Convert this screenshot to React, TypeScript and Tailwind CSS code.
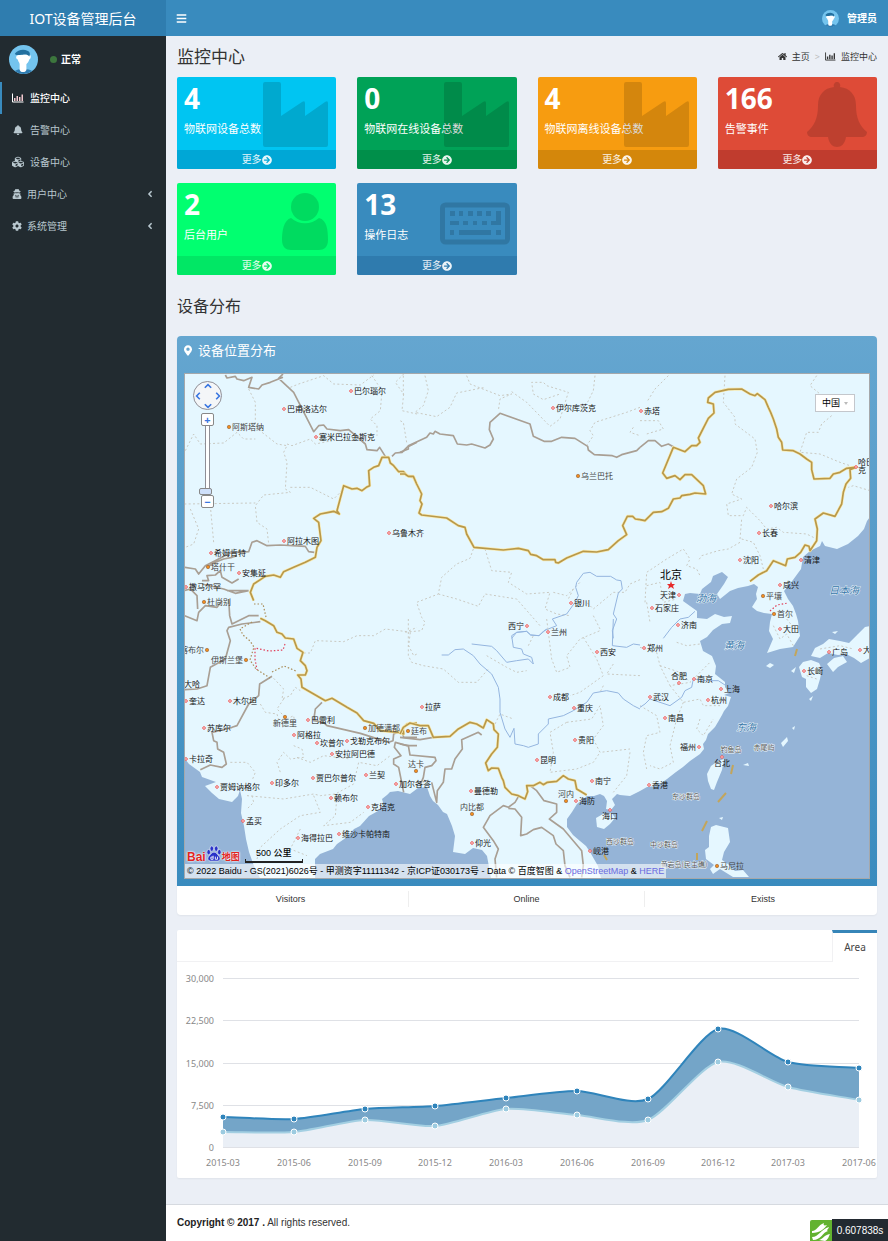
import type { ReactNode } from "react";
import {
  FaAngleLeft,
  FaArrowCircleRight,
  FaBars,
  FaBell,
  FaCog,
  FaCubes,
  FaHome,
  FaMapMarkerAlt,
  FaUserSecret,
} from "react-icons/fa";

function Avatar({ className }: { className: string }) {
  return (
    <svg viewBox="0 0 30 30" className={className} role="img" aria-label="头像">
      <circle cx="15" cy="15" r="15" fill="#74c4ee" />
      <path d="M6 27 C9 24 21 24 24 27 A15 15 0 0 1 6 27Z" fill="#2f7cb0" />
      <path d="M11 18h7v7c0 4-7 4-7 0z" fill="#fff" />
      <path d="M8 11c3-1 11-2 13-1 2 0 2 4 0 5-1 4-4 6-7 6-2 0-4-3-5-6-2-1-2-3-1-4z" fill="#fff" />
      <path d="M6 9c3-4 9-5 13-3 3 1 3 4 2 6-2-3-5-2-7-2-3 0-5 1-7 0z" fill="#23709f" />
    </svg>
  );
}

function BarChartIcon({ className = "", bar = "currentColor" }: { className?: string; bar?: string }) {
  return (
    <svg viewBox="0 0 24 20" className={className} aria-hidden="true">
      <path d="M1 1v17h22" fill="none" stroke="currentColor" strokeWidth="2" />
      <path d="M4 10h3v6H4zM9 6h3v10H9zM14 8h3v8h-3zM19 3h3v13h-3z" fill={bar} />
    </svg>
  );
}

const Industry = () => (
  <path d="M6 1h14q2 0 2 2v32L43 21q3-2 3 1v13L66 21q3-2 3 1v42q0 2-2 2H6q-2 0-2-2V3q0-2 2-2z" />
);
const Person = () => (
  <>
    <circle cx="46" cy="20" r="14" />
    <path d="M32 31c8 7 20 7 28 0 8 2 9 12 9 22 0 7-4 10-9 10H32c-5 0-9-3-9-10 0-10 2-20 9-22z" />
  </>
);
const Keyboard = () => (
  <>
    <rect x="2.500" y="18" width="65" height="37" rx="3" fill="none" stroke="currentColor" strokeWidth="5" />
    <path d="M10 24h5v5h-5zM19 24h4v5h-4zM28 24h5v5h-5zM37 24h5v5h-5zM46 24h5v5h-5zM56 24h5v14H51v-4h5zM10 34h9v4h-9zM23 34h5v4h-5zM33 34h4v4h-4zM42 34h5v4h-5zM10 43h4v5h-4zM19 43h32v5H19zM56 43h5v5h-5z" />
  </>
);
const Bell = () => (
  <>
    <path d="M37 1c2 0 4 2 3 5 10 1 16 8 16 18 0 14 4 21 11 27 0 3-2 5-5 5H12c-3 0-5-2-5-5 7-6 11-13 11-27 0-10 6-17 16-18-1-3 1-5 3-5z" />
    <path d="M28 56h18c-1 7-5 10-9 10s-8-3-9-10z" />
  </>
);

const stats = [
  { value: "4", label: "物联网设备总数", bg: "bg-[#00c5f2]", foot: "bg-[#00a7d6]", icon: <Industry /> },
  { value: "0", label: "物联网在线设备总数", bg: "bg-[#00a257]", foot: "bg-[#008f4a]", icon: <Industry /> },
  { value: "4", label: "物联网离线设备总数", bg: "bg-[#f79c10]", foot: "bg-[#d4870b]", icon: <Industry /> },
  { value: "166", label: "告警事件", bg: "bg-[#de4b37]", foot: "bg-[#c03c2e]", icon: <Bell /> },
  { value: "2", label: "后台用户", bg: "bg-[#01ff70]", foot: "bg-[#01e765]", icon: <Person /> },
  { value: "13", label: "操作日志", bg: "bg-[#398bbe]", foot: "bg-[#2f7bae]", icon: <Keyboard /> },
];

function StatCard({ value, label, bg, foot, icon }: (typeof stats)[number]) {
  return (
    <section className={`relative overflow-hidden rounded-xs text-white ${bg}`}>
      <div className="h-[73px] px-[7px] pt-[3px]">
        <div className="font-['Open_Sans'] text-[28px] leading-9 font-bold">{value}</div>
        <p className="pt-[5px] text-[11px] leading-4 whitespace-nowrap">{label}</p>
      </div>
      <svg viewBox="0 0 70 70" className="absolute top-1 right-[7px] size-[70px] fill-current text-black/14" aria-hidden="true">
        {icon}
      </svg>
      <a href="#more" className={`relative flex h-[19px] items-center justify-center text-[10px] text-white/90 ${foot}`}>
        更多
        <FaArrowCircleRight />
      </a>
    </section>
  );
}

const menu: { label: string; icon: ReactNode; active?: boolean; sub?: boolean }[] = [
  { label: "监控中心", icon: <BarChartIcon className="h-[10px] w-3" bar="#f3c9cf" />, active: true },
  { label: "告警中心", icon: <FaBell className="w-3" /> },
  { label: "设备中心", icon: <FaCubes className="size-3" /> },
  { label: "用户中心", icon: <FaUserSecret />, sub: true },
  { label: "系统管理", icon: <FaCog />, sub: true },
];

type Place = [name: string, x: number, y: number, side?: "l" | "t" | "b"];

const cities: Place[] = [
  ["巴尔瑙尔", 351, 392], ["巴甫洛达尔", 284, 410], ["塞米巴拉金斯克", 316, 438], ["阿拉木图", 284, 542],
  ["希姆肯特", 211, 554], ["安集延", 239, 574], ["撒马尔罕", 186, 588], ["乌鲁木齐", 389, 534],
  ["伊尔库茨克", 553, 409], ["银川", 571, 604], ["西宁", 527, 627, "l"], ["兰州", 548, 633],
  ["赤塔", 641, 412], ["哈尔滨", 771, 507], ["长春", 759, 534], ["沈阳", 740, 561], ["清津", 801, 561],
  ["咸兴", 780, 586], ["大田", 780, 630], ["天津", 679, 596, "l"], ["石家庄", 652, 609], ["济南", 678, 626],
  ["奎达", 186, 702], ["木尔坦", 230, 702], ["苏库尔", 204, 729], ["卡拉奇", 186, 760], ["巴雷利", 308, 721],
  ["阿格拉", 294, 736], ["坎普尔", 317, 744], ["戈勒克布尔", 347, 742], ["安拉阿巴德", 332, 755],
  ["贾姆讷格尔", 217, 788], ["印多尔", 272, 784], ["贾巴尔普尔", 313, 779], ["兰契", 366, 776],
  ["赖布尔", 331, 799], ["克塔克", 368, 808], ["孟买", 243, 822], ["海得拉巴", 298, 839],
  ["维沙卡帕特南", 339, 835], ["加尔各答", 396, 785], ["拉萨", 422, 708], ["成都", 550, 698], ["重庆", 574, 709],
  ["西安", 597, 653], ["贵阳", 575, 741], ["昆明", 537, 761], ["南宁", 592, 782], ["曼德勒", 471, 792],
  ["海防", 576, 802], ["海口", 610, 811, "b"], ["仰光", 472, 844], ["岘港", 590, 852], ["郑州", 644, 649],
  ["合肥", 679, 684, "t"], ["南京", 694, 680], ["上海", 721, 690], ["杭州", 708, 701], ["武汉", 650, 698],
  ["南昌", 665, 719], ["福州", 699, 748, "l"], ["台北", 722, 758, "b"], ["香港", 649, 786], ["广岛", 829, 653],
  ["大", 860, 651], ["长崎", 804, 672],
];

const capitals: Place[] = [
  ["阿斯塔纳", 229, 428], ["塔什干", 208, 568], ["杜尚别", 204, 603], ["乌兰巴托", 578, 477], ["平壤", 763, 597],
  ["首尔", 774, 615], ["喀布尔", 207, 651, "l"], ["伊斯兰堡", 246, 661, "l"], ["新德里", 285, 718, "b"],
  ["加德满都", 365, 729], ["廷布", 408, 732], ["达卡", 416, 772, "t"], ["内比都", 472, 815, "t"],
  ["河内", 566, 802, "t"], ["马尼拉", 717, 867],
];

const seas: [string, number, number][] = [["渤海", 706, 603], ["日本海", 844, 595], ["黄海", 734, 650], ["东海", 746, 732]];

const islands: [string, number, number][] = [
  ["钓鱼岛", 731, 753], ["赤尾屿", 764, 751], ["东沙群岛", 686, 800], ["中沙群岛", 664, 848],
  ["黄岩岛(民主礁)", 684, 868], ["西沙群岛", 620, 845],
];

function PlaceLabel({ place, capital }: { place: Place; capital?: boolean }) {
  const [name, x, y, side] = place;
  const tx = side === "l" ? x - 3 : side ? x : x + 3;
  const ty = side === "t" ? y - 4 : side === "b" ? y + 9 : y + 3;
  return (
    <g>
      {capital ? (
        <circle cx={x} cy={y} r="1.700" fill="#f08c1e" stroke="#94633a" strokeWidth=".6" />
      ) : (
        <circle cx={x} cy={y} r="1.300" fill="#fff" stroke="#ee5555" strokeWidth="1" />
      )}
      <text x={tx} y={ty} textAnchor={side === "l" ? "end" : side ? "middle" : "start"} fill={capital ? "#444" : "#151515"}>
        {name}
      </text>
    </g>
  );
}

/* Border sheets are drawn at three times the map scale, each with its own origin. */
const sheets = [
  {
    origin: "translate(177 330) scale(.33333)",
    gold: "M720 468L710 445 690 440 680 428 665 428 650 410 640 402 635 385 615 385 605 410 590 415 575 425 578 470 568 475 555 485 540 478 525 480 500 470 480 545 487 555 470 547 455 550 430 555 410 568 425 580 432 635 420 655 415 685 385 700 350 715 320 728 310 745 290 738 265 742 230 765 220 790 230 815",
    gray: "M145 138L150 147 175 142 180 150 200 155 225 145 215 175 245 180 255 168 280 160 318 145 M318 135L305 148 350 190 410 308 425 290 440 288 450 300 490 305 515 302 565 345 570 362 600 365 608 355 625 382 M645 382L655 372 675 370 690 355 720 340 M22 715L55 720 65 735 85 710 160 672 215 668 225 640 240 635 270 650 310 648 385 652 395 668 412 670 M90 715L115 700 140 690 165 685 180 680 M75 755L95 755 90 740 115 738 130 725 135 745 165 762 185 750 M75 765L140 780 175 793 215 785 M215 785L150 785 M22 785L40 780 60 800 62 840",
    dash: "M215 180L235 220 235 288 255 310 300 345 330 350 320 370 330 400 325 480 340 490 260 498 235 530 240 580 270 600 275 645 M25 365L50 315 70 345 140 342 180 310 200 330 235 330 M330 345L345 350 400 330 415 345 465 335 M340 175L365 165 440 140 470 165 550 168 590 138 M340 475L400 475 470 510 500 480 M22 525L235 522 M100 530L110 640 M40 540L65 600 50 645 25 655 M585 140L615 185 610 245 580 270 600 290 600 320 M680 135L655 160 680 195 675 245 720 255",
    river: "",
  },
  {
    origin: "translate(400 370) scale(.33333)",
    gold: "M0 315L15 315 25 322 40 322 50 345 65 375 60 395 66 405 57 432 65 438 140 447 175 470 195 475 200 495 222 535 310 543 355 538 385 545 392 556 410 560 430 572 465 572 467 580 475 582 500 567 550 547 590 549 625 542 655 515 680 497 668 470 682 442 698 442 706 450 720 452",
    gray: "M0 250L25 240 25 230 80 205 90 192 100 195 105 187 120 195 160 200 172 225 200 228 215 225 255 237 270 228 280 210 268 182 270 160 300 133 390 165 400 202 432 217 455 217 485 205 525 208 563 232 565 243 583 257 637 260 650 265 665 257 710 245 720 235",
    dash: "M75 20L85 65 70 110 45 130 110 143 150 115 170 72 255 55 M200 20L210 45 300 80 335 75 300 90 295 125 M335 68L380 100 450 172 480 150 505 70 440 50 430 40 395 40 400 75 430 92 480 75 M585 20L580 65 560 105 505 120 M720 115L680 130 585 160 570 185 580 200 560 230 M700 175L690 190 720 200 M220 540L210 568 170 585 125 625 115 675 50 700 65 745 75 760 65 785 10 790 M115 675L170 690 235 712 255 675 350 690 420 770 M255 540L275 605 335 610 325 640 380 675 450 670 435 720 470 735 510 740 M460 670L500 680 540 640 M720 632L690 645 675 670 640 670 580 720 560 700 M20 220L10 160 0 155 M10 20L10 85 M520 660L505 690 M580 740L600 780",
    river: "M335 808L350 790 380 787 392 798 417 800 432 785 470 770 457 750 500 735 525 700 535 680 527 655 530 640 550 613 570 610 590 622 632 622 650 633 663 635 667 660 655 672 640 735 650 750 637 785 640 808",
  },
  {
    origin: "translate(640 370) scale(.33333)",
    gold: "M0 452L15 455 40 430 65 428 85 418 100 390 120 387 125 380 150 376 165 372 197 375 190 350 155 317 135 317 120 332 105 320 80 328 68 312 100 235 135 248 155 230 170 230 180 220 175 207 205 148 222 132 220 105 203 100 205 87 225 70 265 61 305 60 330 75 345 80 352 74 375 92 385 115 392 130 400 150 410 180 415 205 425 220 428 243 460 245 480 255 500 270 515 280 515 302 522 330 570 328 580 315 600 310 620 298 650 294 630 302 632 328 618 345 610 370 605 405 585 442 550 432 525 450 532 480 530 515 510 545 507 532 495 528 482 550 465 565 442 570 437 590 400 575 380 605 355 618 330 637",
    gray: "M0 235L25 215 45 215 65 232 85 225 100 233",
    dash: "M85 20L45 60 20 100 M255 20L250 100 285 145 285 165 345 210 352 250 335 295 290 330 275 375 305 390 260 405 265 440 310 440 320 415 360 455 380 480 410 475 430 490 500 495 530 510 M300 510L305 450 M305 510L340 520 360 560 370 600 M300 520L265 540 235 545 185 560 175 575 M530 20L510 50 540 75 M575 140L545 165 535 190 500 190 480 250 540 255 600 280 630 290 M690 365L640 350 625 355 M0 155L55 155 70 180 20 195 M15 700L20 610 80 570 130 540 150 570 140 590 170 600 180 620 M20 650L60 640 70 700 110 690 M20 700L30 760",
    river: "M165 727L145 745 120 750 95 775 70 808",
  },
  {
    origin: "translate(177 600) scale(.33333)",
    gold: "M250 58L265 65 290 80 300 100 315 105 325 117 350 120 360 148 378 160 370 185 385 200 390 215 385 228 362 228 372 240 375 265 410 285 445 305 465 298 510 325 540 342 560 365 590 373 610 395 665 400 680 405 678 388 690 375 720 372",
    gray: "M22 50L60 65 65 40 85 20 120 25 135 5 M155 0L158 50 165 75 215 50 245 50 M250 68L195 75 155 85 150 95 160 125 145 180 100 205 90 260 60 270 22 272 M285 232L248 255 245 290 215 315 180 380 165 385 105 400 110 425 120 430 122 450 140 460 148 495 135 505 100 498 70 512 M435 310L415 330 410 365 440 370 450 380 550 403 635 430 648 425 650 405 675 395 680 415 720 415 M720 440L690 440 655 430 652 445 672 470 650 480 650 495 665 505 680 580",
    dash: "M380 162L400 162 415 125 500 128 540 110 590 110 625 90 690 98 720 85 M290 238L320 270 315 300 340 290 355 265 370 275 M320 300L300 330 330 360 350 350 355 385 M250 315L265 340 300 345 310 380 M160 490L210 490 235 520 225 545 M210 590L320 600 410 585 430 590 475 585 530 555 545 490 600 500 640 470 M350 440L375 450 380 475 340 480 320 460 300 490 310 520 M360 475L400 490 440 470 520 480 M410 590L430 640 370 650 310 690 250 745 240 780 M480 590L475 650 440 680 520 670 560 640 M370 690L340 750 390 770 M700 100L695 140 710 170 720 165 M225 590L230 610 210 630",
    river: "",
  },
  {
    origin: "translate(400 620) scale(.33333)",
    gold: "M0 345L10 325 30 312 60 320 85 320 100 355 150 352 175 330 210 310 230 315 250 327 260 302 280 315 282 332 295 345 292 385 275 405 257 432 265 455 275 447 295 448 305 475 310 485 315 505 335 525 355 530 375 540 383 518 380 500 400 500 420 490 430 497 442 490 470 487 490 470 505 480 525 485 530 510 560 528",
    gray: "M0 375L25 380 30 408 105 415 108 425 95 440 75 445 70 475 60 500 M0 355L60 362 100 355 M245 348L235 340 185 362 187 390 165 420 155 450 135 450 130 490 112 515 110 550 95 490 M357 530L345 550 325 565 310 560 270 590 250 625 280 665 295 690 285 720 290 775 M325 568L345 570 365 595 362 650 380 645 400 632 425 625 460 650 468 675 490 695 495 740 510 775 M390 500L410 515 432 545 470 555 470 580 448 600 490 630 545 695 550 740 545 775",
    dash: "M25 0L25 110 35 130 70 140 130 150 175 190 230 190 265 150 M260 110L320 145 350 160 380 155 M385 80L400 50 M440 0L455 120 470 160 510 145 500 110 540 60 600 35 M550 55L590 120 610 170 540 220 510 230 M285 315L300 285 340 300 M500 310L450 340 460 400 450 460 530 450 580 430 600 400 M500 310L575 300 600 260 610 320 580 360 600 400 690 390 M690 400L680 470 640 520 M610 200L600 220 M640 135L620 165 720 170",
    river: "M335 50L350 40 380 37 392 48 417 50 440 30 M335 50L340 85 365 90 370 105 395 115 400 135 385 120 350 125 320 130 290 95 275 82 215 75 M640 0L637 80 680 85 700 75 720 78 M125 108L145 108 165 92 190 90 220 110 240 135 275 165 295 205 300 240 300 280 315 330 330 355 342 328 345 375 370 380 385 385 415 375 415 345 445 315 445 300 490 290 520 275 560 250 580 222 620 215 655 222 670 240 700 260 720 270",
  },
  {
    origin: "translate(640 620) scale(.33333)",
    gold: "",
    gray: "",
    dash: "M0 85L50 100 60 140 90 200 150 190 M110 70L140 80 180 75 M60 140L120 160 150 190 190 150 210 130 M90 200L130 250 180 240 190 260 240 260 M130 250L110 300 90 380 100 430 60 450 30 440 M180 300L170 330 190 350 220 300 M0 260L50 290 60 340 20 350 10 400 20 450 M400 20L420 60 440 45 460 80 M440 0L460 25 M540 90L600 80 640 90 M500 170L530 180",
    river: "M0 265L15 255 30 240 60 250 90 260 125 235 135 215 155 205 160 180 200 185 235 185 258 200",
  },
];

function DeviceMap() {
  return (
    <svg
      viewBox="185 375 684 504"
      className="block h-auto w-full bg-[#e5f7ff] font-['Noto_Sans_CJK_SC',sans-serif] text-[8px]"
      role="img"
      aria-label="设备位置分布"
    >
      <g fill="#95b4d7">
        <path d="M870 518L867 522 864 530 858 537 848 545 837 550 825 547 822 542 820 547 810 552 803 558 801 570 790 585 784 592 788 600 793 607 796 615 798 622 800 637 793 648 780 650 767 654 773 640 769 632 770 623 772 615 764 614 757 612 752 608 757 600 756 595 758 588 754 585 748 587 738 589 730 592 720 600 717 595 724 585 728 578 722 573 713 577 711 583 702 590 700 595 690 594 685 595 683 602 697 612 697 619 707 620 715 615 724 618 732 617 730 624 722 625 713 631 707 638 700 642 703 652 712 657 716 667 715 675 725 683 725 688 729 694 724 696 731 698 728 707 724 712 722 716 718 723 715 728 708 735 706 741 703 745 704 750 700 755 690 762 683 768 676 773 667 780 657 787 647 788 640 792 630 797 620 796 617 795 612 800 615 806 611 811 606 810 607 802 604 797 600 795 594 797 587 797 582 801 577 805 572 813 567 820 567 828 573 836 580 842 586 847 590 853 594 860 598 867 601 879 870 879Z" />
        <path d="M315 879L315 860 320 855 333 850 337 845 347 838 354 830 360 827 369 817 378 812 384 807 382 800 387 796 390 793 398 792 410 795 418 789 427 788 430 797 433 802 438 806 443 813 447 815 452 827 455 837 453 853 465 855 473 849 482 851 487 857 491 879Z" />
        <path d="M185 760L189 765 200 773 202 778 216 783 205 787 212 794 219 800 232 803 238 797 240 791 242 800 241 814 244 827 246 840 249 853 254 867 260 879 185 879Z" />
      </g>
      <g fill="#e5f7ff">
        <path d="M596 819L603 815 612 814 615 819 610 825 604 830 597 828Z" />
        <path d="M718 762L724 760 722 771 717 783 714 791 711 790 708 782 707 775 711 767Z" />
        <path d="M711 828L716 826 728 829 730 843 724 853 722 861 728 865 735 872 743 871 749 878 733 878 720 870 713 875 710 870 714 866 706 860 705 851 709 848 709 837Z" />
        <path d="M811 657L815 649 823 645 829 640 840 642 849 644 858 635 865 628 870 627 870 659 861 664 854 659 846 655 838 656 828 654 820 659Z" />
        <path d="M799 668L803 663 811 661 819 664 822 670 820 680 817 690 811 694 806 688 806 680 802 678Z" />
        <path d="M827 665L834 659 843 657 847 663 838 668 833 673Z" />
        <path d="M766 667L770 664 774 666 770 669ZM781 744L787 738 788 742 783 748ZM743 766L748 764 749 767ZM792 729L795 727 794 731ZM791 672L796 668 794 674ZM809 700L813 697 811 702ZM832 633L838 632 835 635ZM719 819L723 818 722 821Z" />
      </g>
      {sheets.map((s) => (
        <g key={s.origin} transform={s.origin} fill="none" strokeLinejoin="round">
          <path d={s.dash} stroke="#c9c9c2" strokeWidth="3" strokeDasharray="6 7" />
          <path d={s.river} stroke="#94b5df" strokeWidth="3" />
          <path d={s.gray} stroke="#a99f94" strokeWidth="5" />
          <path d={s.gold} stroke="#f8ebb4" strokeWidth="9" />
          <path d={s.gold} stroke="#b8984a" strokeWidth="5" />
        </g>
      ))}
      <g fill="none" strokeWidth="1.200" strokeDasharray="1.500 2">
        <path d="M254 605L263 605 266 618M252 623L240 630 243 636 250 642 254 648 250 661 256 670 270 679M272 673L284 667 296 672" stroke="#a98c58" />
        <path d="M285 645L283 651 269 652 255 649 255 660 257 671M770 612L777 606 788 604" stroke="#e0405a" />
      </g>
      <path d="M733 766L731 775M726 794L718 803M707 822L702 832M697 854L697 861M604 856L607 861M797 650L795 657" stroke="#c2a55c" strokeWidth="2" />
      <g stroke="#eaf3fa" paintOrder="stroke" strokeLinejoin="round">
        <g textAnchor="middle" fill="#555" strokeWidth="1">
          {islands.map(([name, x, y]) => (
            <text key={name} x={x} y={y} className="text-[7px]">{name}</text>
          ))}
        </g>
        <g textAnchor="middle" fill="#3475a8" strokeWidth="1" className="text-[10px] italic">
          {seas.map(([name, x, y]) => (
            <text key={name} x={x} y={y}>{name}</text>
          ))}
        </g>
      </g>
      {capitals.map((p) => <PlaceLabel key={p[0]} place={p} capital />)}
      {cities.map((p) => <PlaceLabel key={p[0]} place={p} />)}
      <text x="184" y="688" fill="#151515">大哈</text>
      <circle cx="856" cy="468" r="1.300" fill="#fff" stroke="#ee5555" />
      <text fill="#151515">
        <tspan x="858" y="466">哈巴</tspan>
        <tspan x="858" y="474">克</tspan>
      </text>
      <text x="671" y="580" textAnchor="middle" fill="#000" className="text-[11px]">北京</text>
      <path d="M671 582l1 3h3l-2 2 1 3-3-2-3 2 1-3-2-2h3z" fill="#e62a2a" />
    </svg>
  );
}

function BaiduLogo() {
  return (
    <div className="flex items-end font-['Liberation_Sans'] text-[12px] leading-3 font-bold text-[#e1241f] [text-shadow:0_0_2px_#fff,0_0_2px_#fff]">
      <span>Bai</span>
      <svg viewBox="0 0 18 19" className="h-[19px] w-4" aria-hidden="true">
        <g fill="#2932c8" stroke="#fff" strokeWidth=".6">
          <ellipse cx="3" cy="8" rx="2" ry="3" />
          <ellipse cx="6.500" cy="4" rx="2" ry="3" />
          <ellipse cx="11.500" cy="4" rx="2" ry="3" />
          <ellipse cx="15" cy="8" rx="2" ry="3" />
          <path d="M9 8c3 0 4 3 6 5 2 3 0 5-2 5H5c-2 0-4-2-2-5 2-2 3-5 6-5z" />
        </g>
        <path d="M8 12v4H5.500v-2.500H8M10.500 13v3H13v-3" fill="none" stroke="#fff" />
      </svg>
      <span className="font-['Noto_Sans_CJK_SC'] text-[9px]">地图</span>
    </div>
  );
}

function PanControl() {
  const arrows: [string, string, string][] = [
    ["向上", "M1 6l4-4 4 4", "col-start-2 row-start-1"],
    ["向左", "M6 1l-4 4 4 4", "col-start-1 row-start-2"],
    ["向右", "M4 1l4 4-4 4", "col-start-3 row-start-2"],
    ["向下", "M1 4l4 4 4-4", "col-start-2 row-start-3"],
  ];
  return (
    <div className="grid size-[29px] grid-cols-3 grid-rows-3 place-items-center rounded-full border border-[#8e8e96] bg-[#f4f6f8]">
      {arrows.map(([name, d, place]) => (
        <button key={name} aria-label={name} className={place}>
          <svg viewBox="0 0 10 10" className="size-2" aria-hidden="true">
            <path d={d} fill="none" stroke="#3976e0" strokeWidth="2" />
          </svg>
        </button>
      ))}
    </div>
  );
}

const months = ["2015-03", "2015-06", "2015-09", "2015-12", "2016-03", "2016-06", "2016-09", "2016-12", "2017-03", "2017-06"];
const xs = [46, 117, 188, 258, 329, 400, 471, 541, 611, 682];
const upper = [155, 157, 147, 144, 136, 129, 137, 67, 100, 106];
const lower = [170, 170, 158, 164, 147, 153, 158, 100, 125, 138];

function curve(ys: number[]) {
  const slope = ys.map((_, i) => {
    const a = Math.max(0, i - 1);
    const b = Math.min(ys.length - 1, i + 1);
    return (ys[b] - ys[a]) / (xs[b] - xs[a]);
  });
  return ys.reduce((d, y, i) => {
    if (i === 0) return `M${xs[0]} ${y}`;
    const q = (xs[i] - xs[i - 1]) / 4;
    return `${d}C${xs[i - 1] + q} ${ys[i - 1] + q * slope[i - 1]} ${xs[i] - q} ${y - q * slope[i]} ${xs[i]} ${y}`;
  }, "");
}

function AreaChart() {
  return (
    <svg viewBox="0 0 700 216" className="block h-auto w-full font-['Noto_Sans',sans-serif] text-[9px]" role="img" aria-label="Area">
      {["30,000", "22,500", "15,000", "7,500", "0"].map((t, i) => {
        const y = 16 + Math.round(i * 42.3);
        return (
          <g key={t}>
            <path d={`M46 ${y + 0.5}H682`} stroke="#dfe1e6" strokeWidth="1" />
            <text x="37" y={y + 4} textAnchor="end" fill="#888">{t}</text>
          </g>
        );
      })}
      <path d={`${curve(upper)}V185H46Z`} fill="#74a5c8" />
      <path d={curve(upper)} fill="none" stroke="#2f84bb" strokeWidth="2" />
      <path d={`${curve(lower)}V185H46Z`} fill="#eaeff6" />
      <path d={curve(lower)} fill="none" stroke="#a3cfe2" strokeWidth="2" />
      {xs.map((x, i) => (
        <g key={x} stroke="#fff" strokeWidth="1">
          <circle cx={x} cy={upper[i]} r="3" fill="#2f84bb" />
          <circle cx={x} cy={lower[i]} r="3" fill="#9ccbe0" />
        </g>
      ))}
      {months.map((m, i) => (
        <text key={m} x={xs[i]} y="204" textAnchor="middle" fill="#888">{m}</text>
      ))}
    </svg>
  );
}

export default function App() {
  return (
    <div className="flex min-h-screen flex-col bg-[#ebeff6] font-['Noto_Sans','Noto_Sans_CJK_SC',sans-serif] text-[10px] text-[#333]">
      <header className="flex h-9 bg-[#398bbe] text-white">
        <a href="#home" className="flex w-[166px] shrink-0 items-center justify-center bg-[#2f7daf] text-[14px]">
          IOT设备管理后台
        </a>
        <button aria-label="切换菜单" className="px-[10px]">
          <FaBars className="size-[11px]" />
        </button>
        <a href="#me" className="ml-auto flex items-center gap-2 pr-[11px] font-bold">
          <Avatar className="size-[17px]" />
          管理员
        </a>
      </header>

      <div className="flex flex-1">
        <aside className="w-[166px] shrink-0 bg-[#222b30] text-[#b8c7ce]">
          <div className="flex h-[46px] items-center pl-[9px] font-bold text-white">
            <Avatar className="size-[29px]" />
            <span className="mr-1 ml-3 size-[7px] rounded-full bg-[#3c763d]" />
            正常
          </div>
          <nav>
            {menu.map((m) => (
              <a
                key={m.label}
                href={`#${m.label}`}
                className={`flex h-8 items-center border-l-2 pr-[11px] pl-[10px] ${m.active ? "border-[#398bbe] font-medium text-white" : "border-transparent"}`}
              >
                {m.icon}
                <span className={m.sub ? "ml-[5px]" : "ml-[6px]"}>{m.label}</span>
                {m.sub && <FaAngleLeft className="ml-auto" />}
              </a>
            ))}
          </nav>
        </aside>

        <div className="flex min-w-0 flex-1 flex-col">
          <main className="flex-1 px-[11px] pb-[25px]">
            <div className="flex h-[41px] items-center justify-between">
              <h1 className="text-[17px]">监控中心</h1>
              <nav className="flex items-center text-[9px]" aria-label="位置">
                <FaHome />
                <a href="#home" className="ml-[5px]">主页</a>
                <span className="mx-[5px] text-[#bbb]">&gt;</span>
                <BarChartIcon className="h-[9px] w-[11px]" />
                <span className="ml-[5px]">监控中心</span>
              </nav>
            </div>

            <div className="grid grid-cols-4 gap-x-[21px] gap-y-[14px]">
              {stats.map((s) => <StatCard key={s.label} {...s} />)}
            </div>

            <h2 className="flex h-[61px] items-center text-[16px]">设备分布</h2>

            <section className="overflow-hidden rounded-sm bg-white shadow-xs">
              <div className="bg-linear-to-b from-[#65a6d0] to-[#398bbe] px-[7px] pb-[7px]">
                <h3 className="flex h-[37px] items-center gap-[6px] pb-2 text-[13px] text-white">
                  <FaMapMarkerAlt className="h-[11px] w-2" />
                  设备位置分布
                </h3>
                <div className="relative overflow-hidden border border-[#a5a8ab]">
                  <DeviceMap />
                  <div className="absolute top-[7px] left-2 flex flex-col items-center">
                    <PanControl />
                    <button aria-label="放大" className="mt-[3px] flex h-[13px] w-[13px] items-center justify-center rounded-xs border border-[#888] bg-white text-[11px] leading-none font-bold text-[#3976e0]">+</button>
                    <input
                      type="range"
                      min="0"
                      max="18"
                      defaultValue="0"
                      aria-label="缩放级别"
                      className="h-[69px] w-[5px] appearance-none border-r border-l border-[#8e8e96] bg-white [direction:rtl] [writing-mode:vertical-lr] [&::-webkit-slider-thumb]:-ml-[5px] [&::-webkit-slider-thumb]:h-[7px] [&::-webkit-slider-thumb]:w-[13px] [&::-webkit-slider-thumb]:appearance-none [&::-webkit-slider-thumb]:rounded-xs [&::-webkit-slider-thumb]:border [&::-webkit-slider-thumb]:border-[#888] [&::-webkit-slider-thumb]:bg-[#cfe0fa]"
                    />
                    <button aria-label="缩小" className="flex h-[13px] w-[13px] items-center justify-center rounded-xs border border-[#888] bg-white text-[11px] leading-none font-bold text-[#3976e0]">−</button>
                  </div>
                  <button className="absolute top-5 right-[14px] flex h-[18px] w-10 items-center justify-center gap-1 border border-[#c4c7cc] bg-white text-[9px] text-black">
                    中国
                    <span className="border-x-2 border-t-3 border-x-transparent border-t-[#bbb]" />
                  </button>
                  <div className="absolute bottom-[15px] left-[2px] flex items-end gap-[5px]">
                    <BaiduLogo />
                    <div className="w-[58px]">
                      <p className="text-center font-['Liberation_Sans','Noto_Sans_CJK_SC'] text-[9px] leading-3 font-medium text-black">500 公里</p>
                      <div className="h-1 border-x border-b-2 border-[#222]" />
                    </div>
                  </div>
                  <p className="absolute bottom-0 left-0 bg-white/60 px-[2px] font-['Liberation_Sans','Noto_Sans_CJK_SC'] text-[9px] leading-[14px] whitespace-nowrap text-black">
                    © 2022 Baidu - GS(2021)6026号 - 甲测资字11111342 - 京ICP证030173号 - Data © 百度智图 &amp;{" "}
                    <a href="#osm" className="text-[#6a6ae0]">OpenStreetMap</a> &amp; <a href="#here" className="text-[#6a6ae0]">HERE</a>
                  </p>
                </div>
              </div>
              <div className="-mx-1 grid grid-cols-3 divide-x divide-[#eee] pt-[5px] pb-2 text-center font-['Liberation_Sans'] text-[9px] leading-4">
                <div>Visitors</div>
                <div>Online</div>
                <div>Exists</div>
              </div>
            </section>

            <section className="mt-[15px] rounded-xs bg-white shadow-xs">
              <div className="flex h-8 justify-end" role="tablist">
                <div className="flex-1 border-b border-[#f1f1f3]" />
                <button role="tab" aria-selected="true" className="w-[45px] border-t-3 border-l border-t-[#3685b8] border-l-[#f1f1f3] text-[10px] text-[#444]">
                  Area
                </button>
              </div>
              <AreaChart />
            </section>
          </main>

          <footer className="h-[37px] border-t border-[#d6dae0] bg-white px-[11px] font-['Liberation_Sans'] text-[10px] leading-9">
            <strong className="text-[#222]">Copyright © 2017 .</strong> All rights reserved.
          </footer>
        </div>
      </div>

      <div className="fixed right-0 bottom-0 flex h-[22px] font-['Liberation_Sans'] text-[10px] text-white">
        <svg viewBox="0 0 22 22" className="size-[22px]" aria-hidden="true">
          <path d="M0 3q0-2 2-2h20v21H0z" fill="#62b22f" />
          <path d="M2 12c5 0 6-6 12-8-1 2 0 3 3 2-3 4-7 8-15 8zM2 18c7 0 9-8 17-10-1 3-3 3-1 4-5 1-7 9-15 9zM9 21c4-1 5-5 11-6-1 2-2 6-5 7z" fill="#fff" />
        </svg>
        <span className="flex w-14 items-center justify-center bg-[#232a31]">0.607838s</span>
      </div>
    </div>
  );
}
